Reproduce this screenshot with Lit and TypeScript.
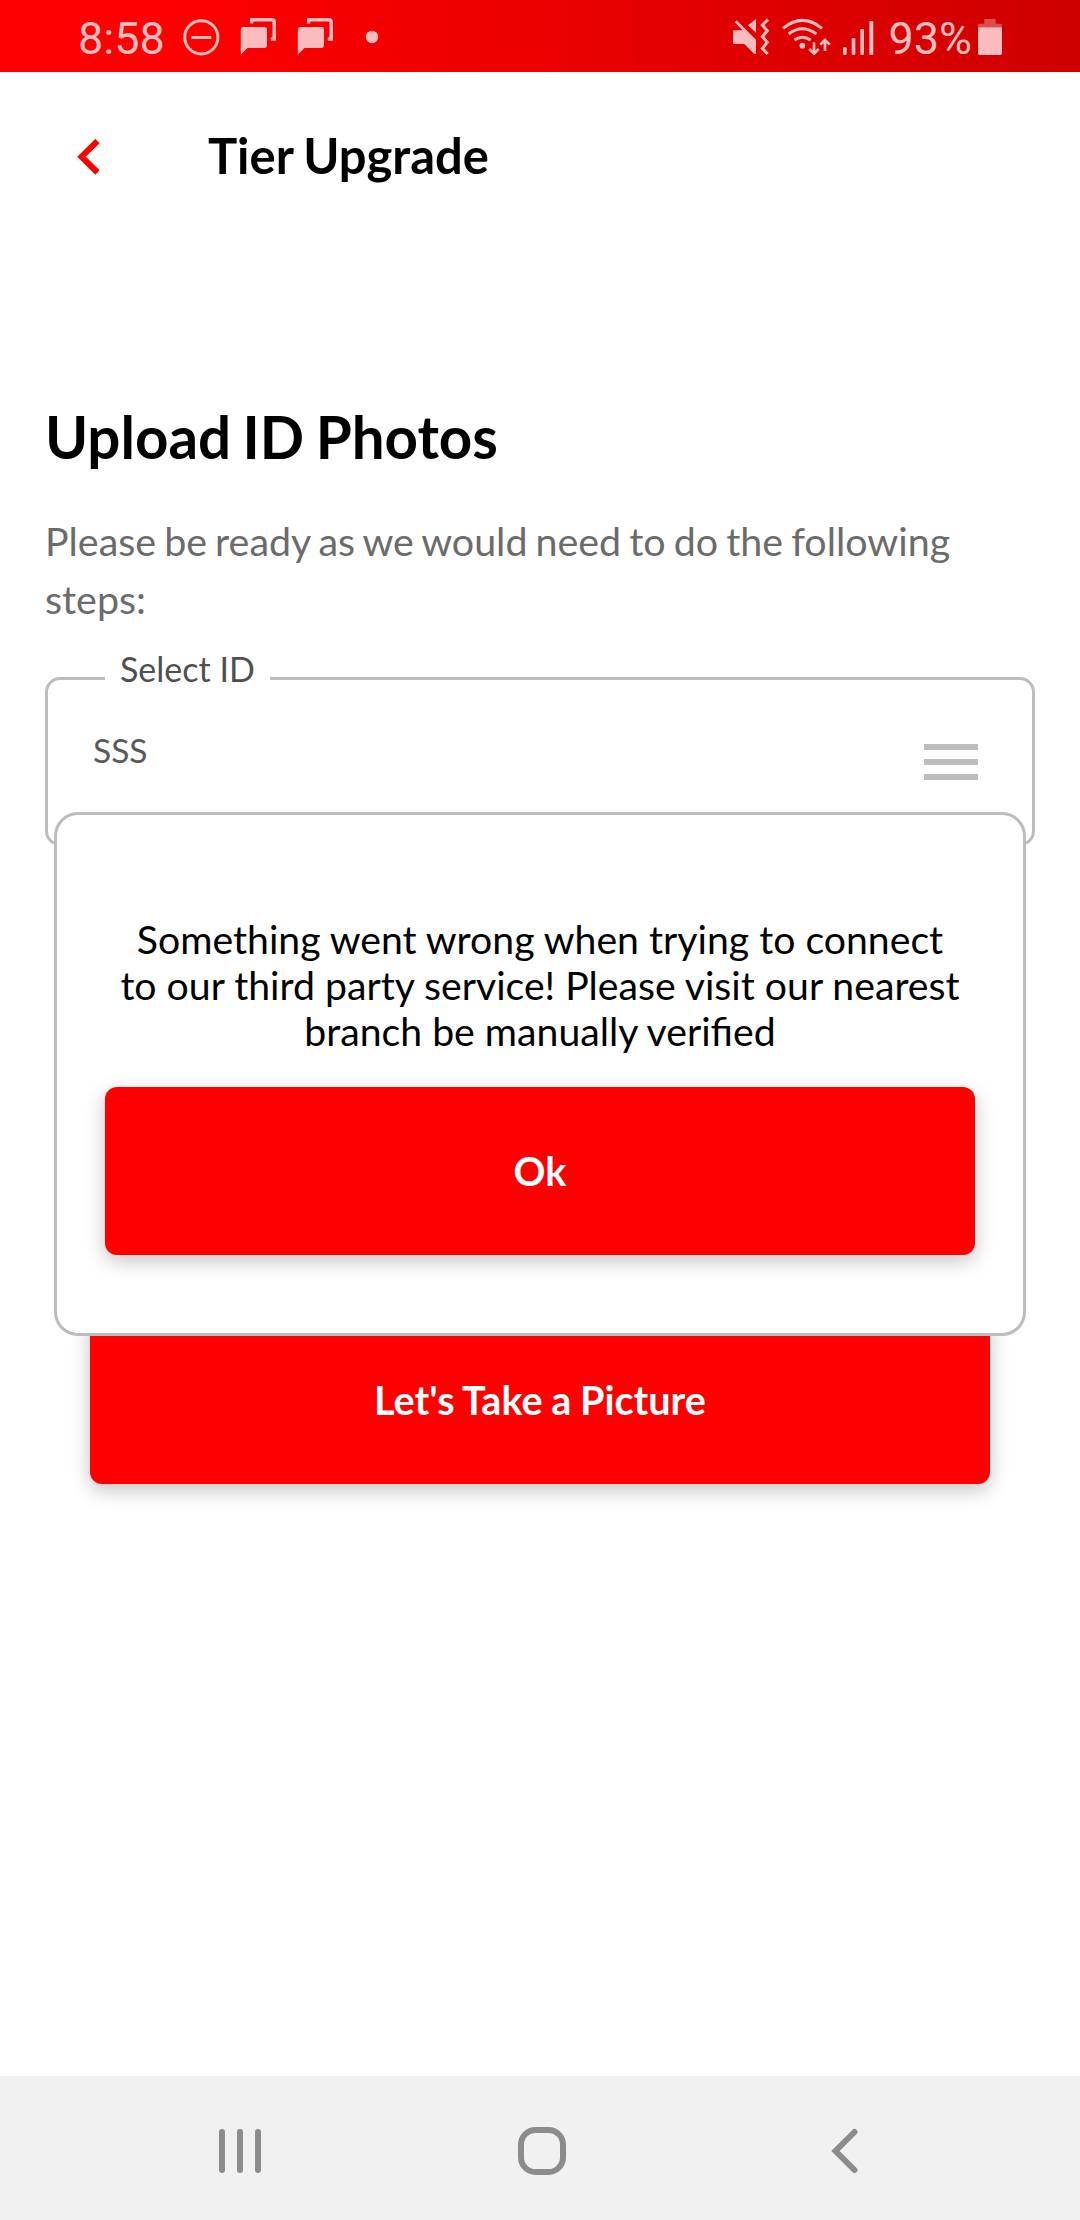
import { LitElement, html, css, svg } from "lit";
import { customElement, property } from "lit/decorators.js";

const chatIcon = html`
  <svg class="glyph" width="57" height="72" viewBox="0 0 57 72">
    <path fill="currentColor" d="M18 27h21.6a2.4 2.4 0 0 1 2.4 2.4v16.2a2.4 2.4 0 0 1-2.4 2.4H22.6L15.8 54.8V29.4A2.4 2.4 0 0 1 18 27z" />
    <path fill="none" stroke="currentColor" stroke-width="3.4" d="M26.6 23.4V19.8H46.8a2.4 2.4 0 0 1 2.4 2.4V39H45.8" />
  </svg>`;

@customElement("status-bar")
class StatusBar extends LitElement {
  @property() time = "";
  @property() battery = "";

  static styles = css`
    :host {
      display: flex;
      justify-content: space-between;
      height: 72px;
      background: linear-gradient(90deg, #ff0000 0%, #ff0000 14%, #ce0000 100%);
      color: #fbbcbf;
      font: 400 45px/72px Roboto, sans-serif;
    }
    .side { display: flex; }
    .left { padding-left: 78px; }
    .right { padding-right: 72px; }
    .glyph { display: block; flex: none; }
    .time { width: 102px; padding-top: 2.5px; }
    .level { width: 83.5px; padding: 2.5px 0 0 8.5px; }
  `;

  render() {
    return html`
      <div class="side left">
        <div class="time">${this.time}</div>
        <svg class="glyph" width="45" height="72" viewBox="0 0 45 72">
          <circle cx="21.3" cy="37.3" r="16.6" fill="none" stroke="currentColor" stroke-width="3" />
          <path d="M11.3 37.5h20" stroke="currentColor" stroke-width="3" />
        </svg>
        ${chatIcon}${chatIcon}
        <svg class="glyph" width="60" height="72" viewBox="0 0 60 72">
          <circle cx="33" cy="37" r="6.2" fill="currentColor" />
        </svg>
      </div>
      <div class="side right">
        <svg class="glyph" width="150" height="72" viewBox="60 0 450 216">
          <g fill="currentColor">
            <path d="M80 61L138 119V162H133L103 132H73a4 4 0 0 1-4-4V95a4 4 0 0 1 4-4H98L74 67z" />
            <path d="M138 57V98L114 76z" />
            <circle cx="277" cy="137" r="8.5" />
            <rect x="399" y="141" width="11" height="24" rx="4" />
            <rect x="425" y="114" width="11" height="51" rx="4" />
            <rect x="451" y="87" width="11" height="78" rx="4" />
            <rect x="478" y="63" width="12" height="102" rx="4" />
          </g>
          <g fill="none" stroke="currentColor" stroke-width="9">
            <path d="M174 59L157 75L172 92L157 110L172 127L157 145L173 162" />
            <path d="M219 85Q277 37 336 85" />
            <path d="M236 102Q277 71 319 102" />
            <path d="M253 120Q277 103 302 120" />
            <path d="M312 127V160M298 147L312 161L326 147" stroke-width="8" />
            <path d="M345 153V121M331 134L345 120L359 134" stroke-width="8" />
          </g>
        </svg>
        <div class="level">${this.battery}</div>
        <svg class="glyph" width="36" height="72" viewBox="786 0 108 216">
          <path fill="currentColor" opacity="0.4" d="M804 82V75q0-4 4-4H823V57H857V71H872q4 0 4 4V82z" />
          <path fill="currentColor" d="M804 82H876V160q0 5-5 5H809q-5 0-5-5z" />
        </svg>
      </div>`;
  }
}

@customElement("action-button")
class ActionButton extends LitElement {
  @property() label = "";

  static styles = css`
    :host { display: block; }
    .button {
      display: flex;
      align-items: center;
      justify-content: center;
      width: 100%;
      height: 168px;
      padding: 0;
      border: 0;
      border-radius: 12px;
      background: #ff0000;
      color: #fff;
      font: 700 39.6px/48px Lato, sans-serif;
      word-spacing: -1px;
      box-shadow: 0 6px 20px rgba(0, 0, 0, 0.24);
    }
  `;

  render() {
    return html`<button class="button">${this.label}</button>`;
  }
}

@customElement("id-field")
class IdField extends LitElement {
  @property() label = "";
  @property() value = "";

  static styles = css`
    :host { display: block; }
    .box {
      position: relative;
      box-sizing: border-box;
      display: flex;
      justify-content: space-between;
      align-items: flex-start;
      height: 169px;
      padding: 50px 54px 0 45px;
      border: 3px solid #bdbdbd;
      border-radius: 15px;
      font: 400 33.5px/40px Lato, sans-serif;
      color: #5a5a5a;
    }
    .label {
      position: absolute;
      left: 57px;
      top: -31px;
      padding: 0 15px;
      background: #fff;
      color: #4f4f4f;
      font-size: 34px;
      white-space: nowrap;
    }
    .menu { display: block; margin-top: 14px; }
  `;

  render() {
    return html`
      <div class="box">
        <span class="label">${this.label}</span>
        <span>${this.value}</span>
        <svg class="menu" width="54" height="36" viewBox="0 0 54 36">
          ${[0, 15, 30].map((y) => svg`<rect y=${y} width="54" height="6" fill="#bdbdbd" />`)}
        </svg>
      </div>`;
  }
}

@customElement("nav-bar")
class NavBar extends LitElement {
  static styles = css`
    :host {
      box-sizing: border-box;
      display: flex;
      justify-content: center;
      align-items: center;
      gap: 242px;
      height: 144px;
      padding: 6px 0 0 4px;
      background: #f1f1f1;
      color: #8c8c8c;
    }
    .icon {
      display: block;
      fill: none;
      stroke: currentColor;
      stroke-width: 6;
      stroke-linecap: round;
    }
  `;

  render() {
    return html`
      <svg class="icon" width="60" height="60" viewBox="0 0 60 60"><path d="M12 11V49M30 11V49M48 11V49" /></svg>
      <svg class="icon" width="60" height="60" viewBox="0 0 60 60"><rect x="9" y="9" width="42" height="42" rx="14.5" /></svg>
      <svg class="icon" width="60" height="60" viewBox="0 0 60 60"><path d="M40.5 11L21.5 30L40.5 49" /></svg>`;
  }
}

@customElement("app-root")
class AppRoot extends LitElement {
  static styles = css`
    :host {
      position: relative;
      display: flex;
      flex-direction: column;
      height: 2220px;
      overflow: hidden;
      background: #fff;
      color: #000;
      font-family: Lato, sans-serif;
    }
    .header {
      display: flex;
      align-items: center;
      gap: 107px;
      height: 166px;
      padding-left: 76px;
    }
    .back { display: block; margin-top: 4px; }
    .title { margin: 0; font: 700 48.9px/60px Lato, sans-serif; word-spacing: -1.5px; }
    .content { flex: 1; padding: 163px 45px 0; }
    .heading { margin: 0; font: 700 58.3px/70px Lato, sans-serif; word-spacing: -2.7px; }
    .intro {
      margin: 41px 0 49px;
      font: 400 39.4px/58px Lato, sans-serif;
      word-spacing: -2px;
      color: #6b6b6b;
    }
    .capture { margin: 470px 45px 0; }
    .dialog {
      position: absolute;
      top: 812px;
      left: 54px;
      right: 54px;
      box-sizing: border-box;
      height: 524px;
      padding: 101px 48px 0;
      border: 3px solid #bdbdbd;
      border-radius: 24px;
      background: #fff;
    }
    .message {
      margin: 0 -20px 33px;
      text-align: center;
      font: 400 39.2px/46px Lato, sans-serif;
    }
  `;

  render() {
    return html`
      <status-bar time="8:58" battery="93%"></status-bar>
      <header class="header">
        <svg class="back" width="25" height="36" viewBox="0 0 25 36">
          <path d="M21.5 2L5.5 17.7L21.5 33.5" fill="none" stroke="#ff0000" stroke-width="6" />
        </svg>
        <h1 class="title">Tier Upgrade</h1>
      </header>
      <main class="content">
        <h2 class="heading">Upload ID Photos</h2>
        <p class="intro">Please be ready as we would need to do the following<br />steps:</p>
        <id-field label="Select ID" value="SSS"></id-field>
        <action-button class="capture" label="Let's Take a Picture"></action-button>
      </main>
      <section class="dialog" role="dialog">
        <p class="message">
          Something went wrong when trying to connect<br />to our third party service! Please visit our
          nearest<br />branch be manually verified
        </p>
        <action-button label="Ok"></action-button>
      </section>
      <nav-bar></nav-bar>`;
  }
}
